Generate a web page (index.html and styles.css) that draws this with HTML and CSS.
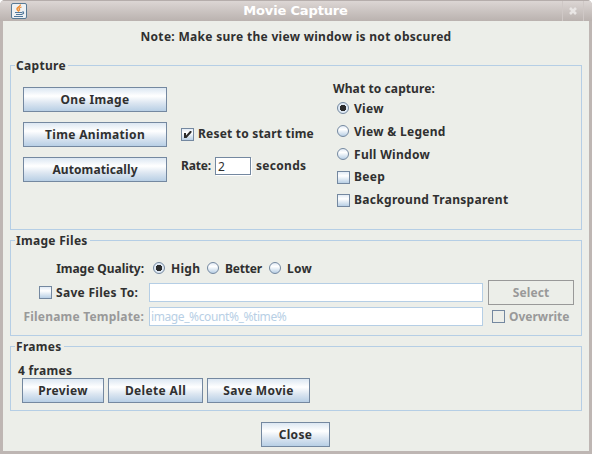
FILE: index.html
```html
<!DOCTYPE html>
<html lang="en">
<head>
<meta charset="utf-8">
<title>Movie Capture</title>
<link rel="stylesheet" href="styles.css">
</head>
<body>
<div class="window">
  <header class="titlebar">
    <svg class="java" width="16" height="16" viewBox="0 0 16 16">
      <rect x=".5" y=".5" width="15" height="15" rx="1.5" fill="#eef1f3" stroke="#587a95"/>
      <path d="M9.500 1.500C9.500 4 5 4.500 6 6.500L8 8.500M10.500 4C7.500 5 7.500 6 9 7.500" fill="none" stroke="#ee8a2c" stroke-width="1.300"/>
      <path d="M4 9.500H11M5 11.500H10.500M3 13.500H12M11 9H12.500V10.500L10.500 11.500" fill="none" stroke="#50789b" stroke-width="1.100"/>
    </svg>
    <h1 class="title">Movie Capture</h1>
    <span class="close-box">
      <svg width="10" height="10" viewBox="0 0 10 10"><path d="M2 2L8 8M8 2L2 8" stroke="#e9e6e5" stroke-width="2.600"/></svg>
    </span>
  </header>
  <main class="content">
    <p class="note">Note: Make sure the view window is not obscured</p>

    <section class="group capture">
      <h2 class="legend">Capture</h2>
      <div class="actions">
        <button class="btn">One Image</button>
        <button class="btn">Time Animation</button>
        <button class="btn snug">Automatically</button>
      </div>
      <div class="timing">
        <label class="option"><span class="check"><svg width="11" height="11" viewBox="0 0 11 11"><path d="M2 4H4V6.500L8 2H9.500V3.500L4.500 9H2Z" fill="#2b2b2b"/></svg></span><span class="reset">Reset to start time</span></label>
        <div class="rate"><span class="tight">Rate:</span><span class="rate-input">2</span><span>seconds</span></div>
      </div>
      <div class="targets">
        <span class="heading snug">What to capture:</span>
        <label class="option"><span class="radio on"></span><span>View</span></label>
        <label class="option"><span class="radio"></span><span>View &amp; Legend</span></label>
        <label class="option"><span class="radio"></span><span>Full Window</span></label>
        <label class="option"><span class="check"></span><span>Beep</span></label>
        <label class="option"><span class="check"></span><span>Background Transparent</span></label>
      </div>
    </section>

    <section class="group files">
      <h2 class="legend">Image Files</h2>
      <div class="quality">
        <span class="name">Image Quality:</span>
        <label class="option high"><span class="radio on"></span><span>High</span></label>
        <label class="option better"><span class="radio"></span><span class="tight">Better</span></label>
        <label class="option"><span class="radio"></span><span>Low</span></label>
      </div>
      <div class="file-row">
        <label class="option save"><span class="check"></span><span>Save Files To:</span></label>
        <span class="field"></span>
        <button class="btn disabled snug">Select</button>
      </div>
      <div class="file-row template">
        <span class="name dim">Filename Template:</span>
        <span class="field">image_%count%_%time%</span>
        <label class="option dim overwrite"><span class="check clear"></span><span>Overwrite</span></label>
      </div>
    </section>

    <section class="group frames">
      <h2 class="legend">Frames</h2>
      <p class="count">4 frames</p>
      <div class="frame-buttons">
        <button class="btn preview">Preview</button>
        <button class="btn delete">Delete All</button>
        <button class="btn movie">Save Movie</button>
      </div>
    </section>

    <button class="btn close">Close</button>
  </main>
</div>
</body>
</html>
```
FILE: styles.css
```css
* { box-sizing: border-box; }
body {
  margin: 0;
  background: #fff;
  color: #303030;
  font: bold 12px/14px "Noto Sans", sans-serif;
  letter-spacing: .3px;
  white-space: nowrap;
}
h1, h2, p { margin: 0; font: inherit; }
.window {
  width: 592px;
  height: 454px;
  display: flex;
  flex-direction: column;
  padding: 0 3px 3px;
  background: #beb6b3;
  border-radius: 5px 5px 0 0;
  overflow: hidden;
}
.titlebar {
  flex: none;
  height: 21px;
  margin: 0 -3px;
  padding: 3px 8px 0 11px;
  display: flex;
  justify-content: space-between;
  border-top: 1px solid #b5adab;
  background: linear-gradient(#dcd6d4, #bab2af);
}
.java { margin-top: -1px; }
.title {
  color: #fff;
  font: bold 13px/15px "DejaVu Sans", sans-serif;
  letter-spacing: -.15px;
  margin: -1px 0 0 2px;
}
.close-box {
  width: 22px;
  height: 20px;
  margin-top: -3px;
  display: grid;
  place-items: center;
  border: solid #cfc8c6;
  border-width: 0 1px;
}
.content {
  flex: 1;
  display: flex;
  flex-direction: column;
  padding: 9px 7px 0;
  background: #eceee9;
}
.note { align-self: center; height: 35px; }
.group {
  position: relative;
  flex: none;
  margin-bottom: 10px;
  border: 1px solid #b5cee5;
}
.legend {
  position: absolute;
  top: -7px;
  left: 4px;
  padding: 0 2px 0 1px;
  background: #eceee9;
}
.btn {
  height: 25px;
  padding: 0;
  border: 1px solid #7488a0;
  background: linear-gradient(#dce7f2, #fff 35%, #dce6f1 65%, #b8cfe5);
  color: inherit;
  font: inherit;
  letter-spacing: .35px;
}
.snug, .btn.snug { letter-spacing: .1px; }
.tight { letter-spacing: -.2px; }
.reset { letter-spacing: .2px; }
.btn.disabled { background: none; border-color: #999; color: #999; }
.option { display: flex; align-items: center; height: 14px; }
.radio, .check {
  flex: none;
  border: 1px solid #7488a0;
  background: linear-gradient(#e2ebf5, #fff 35%, #b8cfe5);
}
.radio { width: 12px; height: 12px; margin-right: 5px; border-radius: 50%; }
.radio.on { background: radial-gradient(circle, #2b2b2b 0 3px, #dfe9f4 3.500px); }
.radio + span { padding-top: 2px; }
.check { width: 13px; height: 13px; margin-right: 4px; }
.check svg { display: block; }
.check.clear { background: none; }
.dim { color: #999; }

.capture { height: 165px; display: flex; }
.actions {
  width: 144px;
  margin: 21px 0 0 12px;
  display: flex;
  flex-direction: column;
  gap: 10px;
}
.timing { width: 166px; padding: 61px 0 0 14px; }
.rate { display: flex; align-items: center; height: 18px; margin-top: 16px; }
.rate > :first-child { width: 34px; }
.rate-input {
  width: 36px;
  height: 18px;
  margin-right: 5px;
  padding-left: 2px;
  border: 1px solid #7488a0;
  background: #fff;
  box-shadow: 1px 1px #fff;
  font-weight: normal;
  line-height: 17px;
}
.targets {
  display: flex;
  flex-direction: column;
  gap: 9px;
  padding-top: 16px;
}
.heading { height: 10px; }
.targets .option { padding-left: 4px; }

.files { height: 96px; padding: 20px 7px 0 12px; }
.quality { display: flex; height: 14px; }
.quality .radio { margin-right: 6px; }
.name {
  width: 126px;
  padding-right: 5px;
  text-align: right;
  letter-spacing: .2px;
}
.quality .name { padding-top: 1px; letter-spacing: -.05px; }
.quality .option { padding-left: 4px; }
.quality .high { width: 54px; }
.quality .better { width: 62px; }
.file-row { display: flex; align-items: center; height: 25px; margin-top: 5px; }
.save { width: 126px; padding-left: 16px; }
.field {
  width: 334px;
  height: 19px;
  margin-right: 5px;
  padding-left: 1px;
  border: 1px solid #b5cee5;
  background: #fff;
  color: #b8cfe5;
  font-weight: normal;
  line-height: 17px;
  letter-spacing: -.4px;
}
.disabled { width: 86px; }
.template { height: 19px; margin-top: 2px; }
.overwrite { padding-left: 4px; letter-spacing: 0; }

.frames { height: 65px; padding: 17px 0 0 7px; }
.frame-buttons { display: flex; gap: 4px; padding-left: 4px; }
.preview { width: 82px; }
.delete { width: 95px; }
.movie { width: 103px; }
.close { align-self: center; width: 69px; margin: 1px 1px 0 0; }
```
